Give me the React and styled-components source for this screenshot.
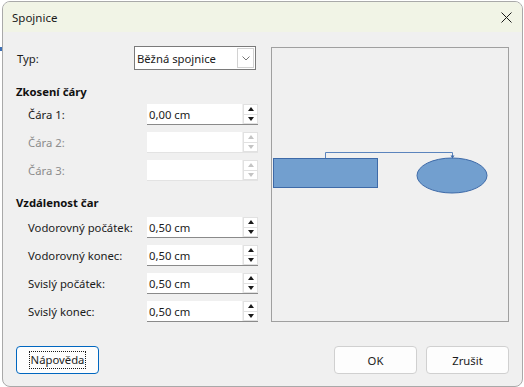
import React from "react";
import styled, { createGlobalStyle } from "styled-components";

const Global = createGlobalStyle`
  html, body { margin: 0; padding: 0; background: #ffffff; }
  body { font-family: "Noto Sans", "Segoe UI", sans-serif; font-size: 11.3px; color: #1b1b1b; }
  * { box-sizing: border-box; }
`;

const Screen = styled.div`
  position: relative;
  width: 524px;
  height: 387px;
  padding: 1px 2px 0 2px;
`;

const BackMark = styled.div`
  position: absolute;
  left: 0;
  top: 47px;
  width: 2px;
  height: 4px;
  background: #3d6fb5;
`;

const Window = styled.div`
  width: 521px;
  height: 386px;
  border: 1px solid #a9a9a9;
  border-radius: 8px;
  background: #f0f0f0;
  overflow: hidden;
  display: flex;
  flex-direction: column;
`;

const TitleBar = styled.div`
  height: 30px;
  flex: none;
  background: #f1f4e6;
  display: flex;
  align-items: center;
  justify-content: space-between;
  padding: 0 8px 0 9px;
`;

const Title = styled.span`
  font-size: 11.5px;
  color: #1a1a1a;
`;

const CloseBtn = styled.div`
  width: 16px;
  height: 16px;
  display: flex;
  align-items: center;
  justify-content: center;
`;

const Body = styled.div`
  flex: 1;
  display: flex;
  flex-direction: column;
  padding: 14px 13px 0 13px;
`;

const Main = styled.div`
  display: flex;
  gap: 13px;
`;

const LeftCol = styled.div`
  width: 243px;
  display: flex;
  flex-direction: column;
`;

const TypRow = styled.div`
  height: 24px;
  display: flex;
  align-items: center;
  justify-content: space-between;
  padding-left: 1px;
  padding-right: 2px;
`;

const Label = styled.span`
  color: ${(p) => (p.$disabled ? "#8c8c8c" : "#1b1b1b")};
  white-space: nowrap;
`;

const Select = styled.div`
  width: 122px;
  height: 24px;
  background: #ffffff;
  border: 1px solid #7a7a7a;
  display: flex;
  align-items: center;
  justify-content: space-between;
  padding: 0 1px 0 2px;
`;

const SelectArrow = styled.div`
  width: 17px;
  height: 20px;
  border: 1px solid #d2d2d2;
  display: flex;
  align-items: center;
  justify-content: center;
`;

const SectionHead = styled.div`
  font-weight: 700;
  height: 16px;
  line-height: 16px;
  margin-top: ${(p) => p.$mt}px;
  margin-bottom: ${(p) => p.$mb}px;
  color: #111;
`;

const Rows = styled.div`
  display: flex;
  flex-direction: column;
  gap: 7px;
`;

const FieldRow = styled.div`
  height: 21px;
  display: flex;
  align-items: center;
  justify-content: space-between;
  padding-left: 12px;
`;

const Spin = styled.div`
  width: 111px;
  height: 21px;
  display: flex;
  background: #ffffff;
  border-bottom: 1px solid ${(p) => (p.$disabled ? "#e3e3e3" : "#8a8a8a")};
`;

const SpinText = styled.div`
  flex: 1;
  padding-left: 2px;
  display: flex;
  align-items: center;
`;

const SpinBtns = styled.div`
  width: 16px;
  display: flex;
  flex-direction: column;
  border-left: 1px solid #f0f0f0;
`;

const SpinBtn = styled.div`
  flex: 1;
  display: flex;
  align-items: center;
  justify-content: center;
  border: 1px solid #e1e1e1;
  & + & { border-top: none; }
`;

const Tri = styled.div`
  width: 0;
  height: 0;
  border-left: 3.5px solid transparent;
  border-right: 3.5px solid transparent;
  ${(p) =>
    p.$up
      ? `border-bottom: 4px solid ${p.$disabled ? "#c4c4c4" : "#1a1a1a"};`
      : `border-top: 4px solid ${p.$disabled ? "#c4c4c4" : "#1a1a1a"};`}
`;

const Preview = styled.div`
  margin-top: 1px;
  width: 238px;
  height: 275px;
  border: 1px solid #a0a0a0;
  background: #f0f0f0;
`;

const Footer = styled.div`
  margin-top: 24px;
  display: flex;
  align-items: center;
  padding-right: 0;
`;

const Button = styled.div`
  width: 83px;
  height: 28px;
  border-radius: 4px;
  background: #fdfdfd;
  border: 1px solid ${(p) => (p.$primary ? "#0067c0" : "#d0d0d0")};
  display: flex;
  align-items: center;
  justify-content: center;
  color: #1b1b1b;
`;

const Focus = styled.span`
  border: 1px dotted #1a1a1a;
  padding: 0 1px;
  line-height: 16px;
`;

const Spacer = styled.div`
  flex: 1;
`;

const ButtonGroup = styled.div`
  display: flex;
  gap: 9px;
`;

function SpinField({ label, value, disabled }) {
  return (
    <FieldRow>
      <Label $disabled={disabled}>{label}</Label>
      <Spin $disabled={disabled}>
        <SpinText>{value}</SpinText>
        <SpinBtns>
          <SpinBtn>
            <Tri $up $disabled={disabled} />
          </SpinBtn>
          <SpinBtn>
            <Tri $disabled={disabled} />
          </SpinBtn>
        </SpinBtns>
      </Spin>
    </FieldRow>
  );
}

export default function App() {
  return (
    <>
      <Global />
      <Screen>
        <BackMark />
        <Window>
          <TitleBar>
            <Title>Spojnice</Title>
            <CloseBtn>
              <svg width="11" height="11" viewBox="0 0 11 11">
                <path d="M0.5 0.5 L10.5 10.5 M10.5 0.5 L0.5 10.5" stroke="#1a1a1a" strokeWidth="1" />
              </svg>
            </CloseBtn>
          </TitleBar>
          <Body>
            <Main>
              <LeftCol>
                <TypRow>
                  <Label>Typ:</Label>
                  <Select>
                    <span>Běžná spojnice</span>
                    <SelectArrow>
                      <svg width="8" height="5" viewBox="0 0 8 5">
                        <path d="M0.5 0.5 L4 4 L7.5 0.5" stroke="#666" fill="none" strokeWidth="0.9" />
                      </svg>
                    </SelectArrow>
                  </Select>
                </TypRow>
                <SectionHead $mt={14} $mb={4}>Zkosení čáry</SectionHead>
                <Rows>
                  <SpinField label="Čára 1:" value="0,00 cm" />
                  <SpinField label="Čára 2:" value="" disabled />
                  <SpinField label="Čára 3:" value="" disabled />
                </Rows>
                <SectionHead $mt={14} $mb={6}>Vzdálenost čar</SectionHead>
                <Rows>
                  <SpinField label="Vodorovný počátek:" value="0,50 cm" />
                  <SpinField label="Vodorovný konec:" value="0,50 cm" />
                  <SpinField label="Svislý počátek:" value="0,50 cm" />
                  <SpinField label="Svislý konec:" value="0,50 cm" />
                </Rows>
              </LeftCol>
              <Preview>
                <svg width="236" height="273" viewBox="0 0 236 273">
                  <rect x="1.5" y="110.5" width="104" height="29" fill="#729fcf" stroke="#3e6aa8" strokeWidth="1" />
                  <ellipse cx="180" cy="127.5" rx="35" ry="17.5" fill="#729fcf" stroke="#3e6aa8" strokeWidth="1" />
                  <path d="M53.5 110 L53.5 104.5 L180.5 104.5 L180.5 110" fill="none" stroke="#5b84bd" strokeWidth="1" />
                  <path d="M178.5 107.5 L182.5 107.5 L180.5 110.5 Z" fill="#3e6aa8" />
                </svg>
              </Preview>
            </Main>
            <Footer>
              <Button $primary>
                <Focus>Nápověda</Focus>
              </Button>
              <Spacer />
              <ButtonGroup>
                <Button>OK</Button>
                <Button>Zrušit</Button>
              </ButtonGroup>
            </Footer>
          </Body>
        </Window>
      </Screen>
    </>
  );
}
